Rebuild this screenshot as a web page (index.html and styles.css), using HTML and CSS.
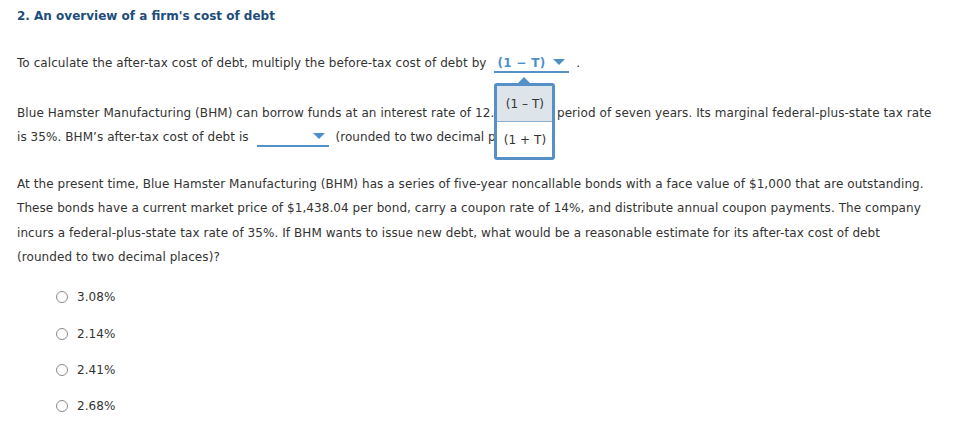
FILE: index.html
```html
<!DOCTYPE html>
<html>
<head>
<meta charset="utf-8">
<link rel="stylesheet" href="styles.css">
</head>
<body>
<div class="page">
  <h2 class="title">2. An overview of a firm's cost of debt</h2>

  <p class="para first">To calculate the after-tax cost of debt, multiply the before-tax cost of debt by <span class="select filled"><span class="value">(1 &minus; T)</span><span class="arrow"></span><span class="menu"><span class="tip"></span><span class="opt hl">(1 &ndash; T)</span><span class="opt">(1 + T)</span></span></span> .</p>

  <p class="para second">Blue Hamster Manufacturing (BHM) can borrow funds at an interest rate of 12.00% for a period of seven years. Its marginal federal-plus-state tax rate is 35%. BHM’s after-tax cost of debt is <span class="select blank"><span class="arrow"></span></span> (rounded to two decimal places).</p>

  <p class="para third">At the present time, Blue Hamster Manufacturing (BHM) has a series of five-year noncallable bonds with a face value of $1,000 that are outstanding. These bonds have a current market price of $1,438.04 per bond, carry a coupon rate of 14%, and distribute annual coupon payments. The company incurs a federal-plus-state tax rate of 35%. If BHM wants to issue new debt, what would be a reasonable estimate for its after-tax cost of debt (rounded to two decimal places)?</p>

  <ul class="choices">
    <li class="choice"><span class="radio"></span><span>3.08%</span></li>
    <li class="choice"><span class="radio"></span><span>2.14%</span></li>
    <li class="choice"><span class="radio"></span><span>2.41%</span></li>
    <li class="choice"><span class="radio"></span><span>2.68%</span></li>
  </ul>
</div>
</body>
</html>
```

FILE: styles.css
```css
html, body {
  margin: 0;
  padding: 0;
  background: #ffffff;
}
body {
  font-family: "DejaVu Sans", Verdana, sans-serif;
  font-size: 12px;
  letter-spacing: 0.07px;
  color: #333333;
}
.page {
  padding: 6px 17px 0 17px;
}
.title {
  margin: 0;
  font-size: 12px;
  line-height: 20px;
  font-weight: bold;
  letter-spacing: 0;
  color: #1d4d7a;
}
.para {
  margin: 0;
  line-height: 24px;
  width: 916px;
}
.first {
  margin-top: 25px;
}
.second {
  margin-top: 26px;
}
.third {
  margin-top: 23px;
  line-height: 24.3px;
}
.select {
  position: relative;
  display: inline-block;
  line-height: 16px;
  border-bottom: 2px solid #5591c6;
  vertical-align: baseline;
  margin: 0 3px 0 4px;
}
.filled {
  padding: 0 1px 0 3px;
}
.blank {
  width: 72px;
  text-align: right;
}
.value {
  color: #4f8fc8;
  font-weight: bold;
  letter-spacing: 0.3px;
}
.arrow {
  display: inline-block;
  width: 0;
  height: 0;
  border-left: 6.5px solid transparent;
  border-right: 6.5px solid transparent;
  border-top: 6px solid #4f8fc8;
  margin-left: 8px;
  margin-right: 3px;
  vertical-align: 2px;
}
.blank .arrow {
  margin: 0 4px 0 0;
}
.menu {
  position: absolute;
  left: 0;
  top: 28px;
  width: 55px;
  border: 3px solid #5591c6;
  border-radius: 3px;
  background: #ffffff;
  display: flex;
  flex-direction: column;
  font-weight: normal;
  color: #333333;
  z-index: 5;
}
.tip {
  position: absolute;
  left: 21px;
  top: -9px;
  width: 0;
  height: 0;
  border-left: 6px solid transparent;
  border-right: 6px solid transparent;
  border-bottom: 6px solid #5591c6;
}
.opt {
  display: flex;
  align-items: center;
  justify-content: center;
  height: 35px;
  line-height: 16px;
  white-space: nowrap;
}
.opt.hl {
  background: #dde5ea;
  border-bottom: 1px solid #8fb0cc;
}
.choices {
  list-style: none;
  margin: 10px 0 0 0;
  padding: 0 0 0 39px;
}
.choice {
  display: flex;
  align-items: center;
  height: 36.3px;
  line-height: 16px;
}
.radio {
  display: inline-block;
  width: 10px;
  height: 10px;
  border: 1px solid #8a8a8a;
  border-radius: 50%;
  background: #ffffff;
  margin-right: 9px;
}
```
